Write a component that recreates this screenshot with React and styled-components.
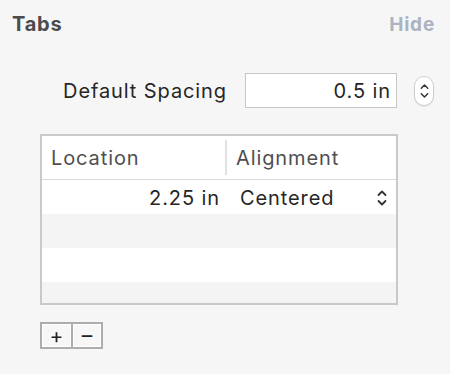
import React from 'react';
import styled, { createGlobalStyle } from 'styled-components';

const GlobalStyle = createGlobalStyle`
    html, body {
        margin: 0;
        padding: 0;
        background: #f6f6f6;
        font-family: Inter, "Liberation Sans", sans-serif;
    }
`;

const Panel = styled.div`
    width: 450px;
    height: 374px;
    box-sizing: border-box;
    padding: 12px 15px 0 12px;
    display: flex;
    flex-direction: column;
`;

const Header = styled.div`
    display: flex;
    justify-content: space-between;
    align-items: baseline;
    height: 24px;
`;

const Title = styled.h2`
    margin: 0;
    font-size: 20px;
    letter-spacing: 0.8px;
    font-weight: 700;
    color: #4b4b4b;
`;

const HideLink = styled.span`
    font-size: 19px;
    letter-spacing: 0.8px;
    font-weight: 700;
    color: #abb2c3;
`;

const SpacingRow = styled.div`
    display: flex;
    align-items: center;
    margin-top: 37px;
    height: 35px;
`;

const Text = styled.span`
    font-size: 20px;
    letter-spacing: 0.9px;
`;

const Label = styled(Text)`
    width: 233px;
    padding-right: 18px;
    box-sizing: border-box;
    text-align: right;
    color: #262626;
`;

const Field = styled.div`
    width: 152px;
    height: 35px;
    box-sizing: border-box;
    border: 1px solid #c6c6c6;
    background: #fff;
    display: flex;
    align-items: center;
    justify-content: flex-end;
    padding-right: 5px;
    font-size: 20px;
    letter-spacing: 0.9px;
    color: #262626;
`;

const Stepper = styled.div`
    margin-left: 17px;
    width: 20px;
    height: 30px;
    box-sizing: border-box;
    border: 1px solid #cfcfcf;
    border-radius: 10px;
    background: #fff;
    display: flex;
    align-items: center;
    justify-content: center;
    box-shadow: 0 1px 1px rgba(0, 0, 0, 0.08);
`;

const Table = styled.div`
    margin: 26px 0 0 28px;
    width: 358px;
    height: 171px;
    box-sizing: border-box;
    border: 2px solid #c9c9c9;
    background: #fff;
    overflow: hidden;
`;

const HeadRow = styled.div`
    display: grid;
    grid-template-columns: 185px 1fr;
    height: 43px;
    border-bottom: 1px solid #d9d9d9;
    align-items: center;
`;

const HeadCell = styled.div`
    font-size: 20px;
    letter-spacing: 0.9px;
    color: #4f4f4f;
    padding-left: ${p => p.$pad}px;
    height: 35px;
    display: flex;
    align-items: center;
    border-right: ${p => (p.$divider ? '2px solid #e2e2e2' : 'none')};
`;

const Row = styled.div`
    display: grid;
    grid-template-columns: 185px 1fr;
    height: 34px;
    align-items: center;
    background: ${p => (p.$alt ? '#f4f4f4' : '#fff')};
`;

const NumCell = styled.div`
    text-align: right;
    padding-right: 7px;
    padding-top: 2px;
    font-size: 20px;
    letter-spacing: 0.9px;
    color: #262626;
`;

const SelectCell = styled.div`
    display: flex;
    justify-content: space-between;
    align-items: center;
    padding: 2px 8px 0 13px;
    font-size: 20px;
    letter-spacing: 0.9px;
    color: #262626;
`;

const ButtonBar = styled.div`
    display: flex;
    margin: 17px 0 0 28px;
    border: 2px solid #adadad;
    width: fit-content;
    background: #adadad;
    gap: 2px;
`;

const SmallButton = styled.button`
    width: ${p => p.$w}px;
    height: 23px;
    border: 1px solid #fff;
    background: #f7f7f7;
    padding: 0;
    font-family: inherit;
    font-size: 21px;
    line-height: 1;
    color: #222;
    display: flex;
    align-items: center;
    justify-content: center;
`;

const Chevrons = ({ w = 12, h = 20, sw = 1.8 }) => (
    <svg width={w} height={h} viewBox="0 0 12 20" fill="none" stroke="#333" strokeWidth={sw} strokeLinecap="round" strokeLinejoin="round">
        <path d="M2.5 7 L6 3.5 L9.5 7" />
        <path d="M2.5 13 L6 16.5 L9.5 13" />
    </svg>
);

const rows = [false, true, false, true];

export default function App() {
    return (
        <Panel>
            <GlobalStyle />
            <Header>
                <Title>Tabs</Title>
                <HideLink>Hide</HideLink>
            </Header>
            <SpacingRow>
                <Label>Default Spacing</Label>
                <Field>0.5 in</Field>
                <Stepper>
                    <Chevrons w={11} h={24} sw={1.6} />
                </Stepper>
            </SpacingRow>
            <Table>
                <HeadRow>
                    <HeadCell $pad={9} $divider>Location</HeadCell>
                    <HeadCell $pad={9}>Alignment</HeadCell>
                </HeadRow>
                {rows.map((alt, i) => (
                    <Row key={i} $alt={alt}>
                        {i === 0 ? (
                            <>
                                <NumCell>2.25 in</NumCell>
                                <SelectCell>
                                    Centered
                                    <Chevrons />
                                </SelectCell>
                            </>
                        ) : null}
                    </Row>
                ))}
            </Table>
            <ButtonBar>
                <SmallButton $w={29}>+</SmallButton>
                <SmallButton $w={28}>–</SmallButton>
            </ButtonBar>
        </Panel>
    );
}
